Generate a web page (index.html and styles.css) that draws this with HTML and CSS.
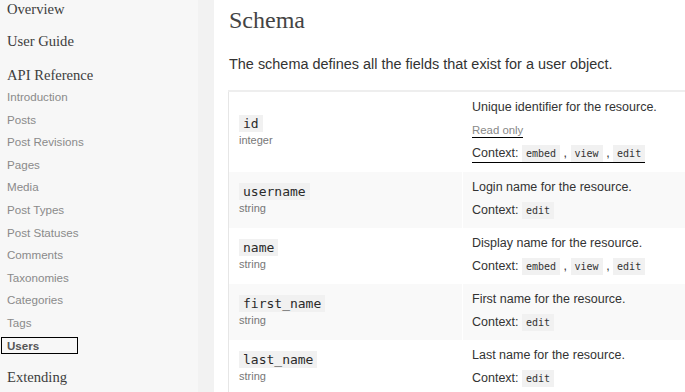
FILE: index.html
```html
<!DOCTYPE html>
<html lang="en">
<head>
    <meta charset="UTF-8">
    <meta name="viewport" content="width=device-width, initial-scale=1.0">
    <title>Users - REST API Handbook</title>
    <link rel="stylesheet" href="styles.css">
</head>
<body>
    <div class="page">
        <!-- Menu lateral -->
        <nav class="sidebar">
            <a class="nav-heading first" href="#">Overview</a>
            <a class="nav-heading" href="#">User Guide</a>
            <a class="nav-heading api" href="#">API Reference</a>
            <ul class="nav-list">
                <li><a href="#">Introduction</a></li>
                <li><a href="#">Posts</a></li>
                <li><a href="#">Post Revisions</a></li>
                <li><a href="#">Pages</a></li>
                <li><a href="#">Media</a></li>
                <li><a href="#">Post Types</a></li>
                <li><a href="#">Post Statuses</a></li>
                <li><a href="#">Comments</a></li>
                <li><a href="#">Taxonomies</a></li>
                <li><a href="#">Categories</a></li>
                <li><a href="#">Tags</a></li>
                <li class="current"><a href="#">Users</a></li>
            </ul>
            <a class="nav-heading ext" href="#">Extending</a>
        </nav>
        <div class="gutter"></div>

        <!-- Conteúdo -->
        <main class="content">
            <h2>Schema</h2>
            <p class="intro">The schema defines all the fields that exist for a user object.</p>

            <table class="schema">
                <tr>
                    <td class="field"><code>id</code><span class="type">integer</span></td>
                    <td class="desc">
                        <p>Unique identifier for the resource.</p>
                        <p><span class="readonly">Read only</span></p>
                        <p><span class="ctx-line">Context: <code>embed</code> , <code>view</code> , <code>edit</code></span></p>
                    </td>
                </tr>
                <tr>
                    <td class="field"><code>username</code><span class="type">string</span></td>
                    <td class="desc">
                        <p>Login name for the resource.</p>
                        <p>Context: <code>edit</code></p>
                    </td>
                </tr>
                <tr>
                    <td class="field"><code>name</code><span class="type">string</span></td>
                    <td class="desc">
                        <p>Display name for the resource.</p>
                        <p>Context: <code>embed</code> , <code>view</code> , <code>edit</code></p>
                    </td>
                </tr>
                <tr>
                    <td class="field"><code>first_name</code><span class="type">string</span></td>
                    <td class="desc">
                        <p>First name for the resource.</p>
                        <p>Context: <code>edit</code></p>
                    </td>
                </tr>
                <tr>
                    <td class="field"><code>last_name</code><span class="type">string</span></td>
                    <td class="desc">
                        <p>Last name for the resource.</p>
                        <p>Context: <code>edit</code></p>
                    </td>
                </tr>
            </table>
        </main>
    </div>
</body>
</html>
```

FILE: styles.css
```css
/* Estilos Gerais */
body {
    margin: 0;
    padding: 0;
    font-family: "Liberation Sans", Arial, sans-serif;
    color: #333;
    background-color: #fff;
    overflow: hidden;
}

.page {
    display: flex;
    height: 392px;
}

/* Menu lateral */
.sidebar {
    width: 198px;
    flex-shrink: 0;
    background-color: #f7f7f7;
    padding-left: 7px;
    box-sizing: border-box;
}

.gutter {
    width: 16px;
    flex-shrink: 0;
    background-color: #f2f2f2;
}

.nav-heading {
    display: block;
    font-family: "Liberation Serif", serif;
    font-size: 14.6px;
    line-height: 18px;
    height: 18px;
    color: #3d3d3d;
    text-decoration: none;
    margin-top: 14px;
}

.nav-heading.first {
    margin-top: 0;
}

.nav-heading.api {
    margin-top: 16px;
}

.nav-heading.ext {
    margin-top: 11px;
}

.nav-list {
    list-style: none;
    margin: 2px 0 0 0;
    padding: 0;
}

.nav-list li {
    height: 22.6px;
    line-height: 22.6px;
    font-size: 11.6px;
}

.nav-list a {
    color: #8a8a8a;
    text-decoration: none;
}

.nav-list li.current {
    display: flex;
    align-items: center;
}

.nav-list li.current a {
    display: block;
    width: 70px;
    height: 15px;
    line-height: 15px;
    margin-left: -6px;
    padding-left: 5px;
    border: 1px solid #000;
    color: #555;
    font-weight: bold;
}

/* Conteúdo */
.content {
    flex: 1;
    padding-left: 14px;
    overflow: hidden;
}

.content h2 {
    font-family: "Liberation Serif", serif;
    font-weight: normal;
    font-size: 24px;
    line-height: 28px;
    color: #444;
    margin: 6px 0 0 1px;
}

.content .intro {
    font-size: 14.45px;
    line-height: 18px;
    margin: 21px 0 0 1px;
    color: #333;
}

.schema {
    margin-top: 17px;
    border-collapse: collapse;
    border-top: 2px solid #eee;
    border-left: 1px solid #e6e6e6;
    width: 520px;
}

.schema tr:nth-child(even) td {
    background-color: #f9f9f9;
}

.schema td {
    padding: 0;
}

.schema td.field {
    width: 234px;
    padding: 0 0 3px 10px;
    vertical-align: middle;
    border-right: 1px solid #fff;
    box-sizing: border-box;
}

.field code {
    display: inline-block;
    font-family: "DejaVu Sans Mono", monospace;
    font-size: 13px;
    line-height: 17px;
    padding: 0 4px;
    background-color: #f1f1f1;
    color: #2a2a2a;
}

.field .type {
    display: block;
    font-size: 11px;
    line-height: 15px;
    color: #777;
    margin-top: 1px;
}

.schema td.desc {
    padding: 4px 9px 6px 9px;
    vertical-align: top;
    font-size: 12.5px;
}

.schema tr:first-child td.desc {
    padding-bottom: 7px;
}

.desc p {
    margin: 0;
    line-height: 23px;
    color: #333;
}

.desc code {
    font-family: "DejaVu Sans Mono", monospace;
    font-size: 10px;
    padding: 3px 4px;
    background-color: #f1f1f1;
    color: #333;
}

.readonly {
    color: #888;
    font-size: 11.4px;
    border-bottom: 1px solid #000;
    padding-bottom: 1px;
}

.ctx-line {
    border-bottom: 1px solid #000;
    padding-bottom: 2px;
}
```
